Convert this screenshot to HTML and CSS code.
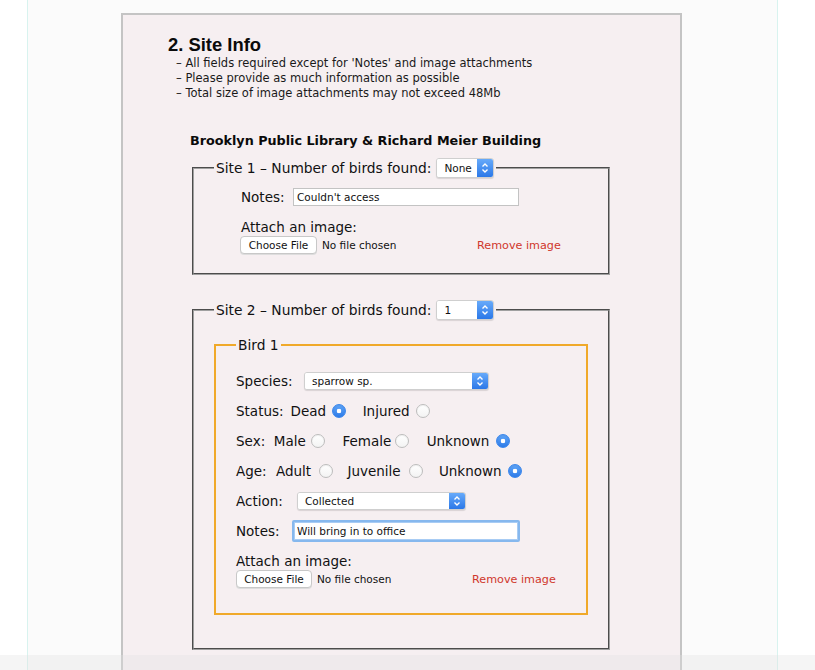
FILE: index.html
```html
<!DOCTYPE html>
<html lang="en">
<head>
<meta charset="utf-8">
<title>Site Info</title>
<link rel="stylesheet" href="styles.css">
</head>
<body>
<div class="page">
  <div class="panel">
    <h2 class="title">2. Site Info</h2>
    <ul class="bullets">
      <li>– All fields required except for 'Notes' and image attachments</li>
      <li>– Please provide as much information as possible</li>
      <li>– Total size of image attachments may not exceed 48Mb</li>
    </ul>
    <h3 class="location">Brooklyn Public Library &amp; Richard Meier Building</h3>

    <fieldset class="site site-one">
      <legend class="site-legend">Site 1 – Number of birds found:
        <span class="select sel-count"><select class="sel-native"><option>None</option><option>1</option></select><span class="stepper"><svg width="8" height="12" viewBox="0 0 8 12"><path d="M1.5 4.5 L4 2 L6.5 4.5 M1.5 7.5 L4 10 L6.5 7.5" fill="none" stroke="#fff" stroke-width="1.4"/></svg></span></span>
      </legend>
      <div class="site-body">
        <div class="row">
          <label class="lbl lbl-notes1">Notes:</label>
          <input class="text-input in-notes1" type="text" value="Couldn't access">
        </div>
        <div class="attach">
          <div class="attach-label">Attach an image:</div>
          <div class="file-row">
            <span class="file-pick"><button class="file-btn" type="button">Choose File</button><span class="file-name">No file chosen</span></span>
            <a class="remove">Remove image</a>
          </div>
        </div>
      </div>
    </fieldset>

    <fieldset class="site site-two">
      <legend class="site-legend">Site 2 – Number of birds found:
        <span class="select sel-count"><select class="sel-native"><option>1</option><option>None</option></select><span class="stepper"><svg width="8" height="12" viewBox="0 0 8 12"><path d="M1.5 4.5 L4 2 L6.5 4.5 M1.5 7.5 L4 10 L6.5 7.5" fill="none" stroke="#fff" stroke-width="1.4"/></svg></span></span>
      </legend>

      <fieldset class="bird">
        <legend class="bird-legend">Bird 1</legend>
        <div class="brow">
          <label class="lbl lbl-species">Species:</label>
          <span class="select sel-species"><select class="sel-native"><option>sparrow sp.</option></select><span class="stepper"><svg width="8" height="12" viewBox="0 0 8 12"><path d="M1.5 4.5 L4 2 L6.5 4.5 M1.5 7.5 L4 10 L6.5 7.5" fill="none" stroke="#fff" stroke-width="1.4"/></svg></span></span>
        </div>
        <div class="brow">
          <span class="lbl lbl-status">Status:</span>
          <span class="opt">Dead</span><input class="radio r-dead" type="radio" name="status" checked>
          <span class="opt o-injured">Injured</span><input class="radio r-injured" type="radio" name="status">
        </div>
        <div class="brow">
          <span class="lbl lbl-sex">Sex:</span>
          <span class="opt">Male</span><input class="radio r-male" type="radio" name="sex">
          <span class="opt o-female">Female</span><input class="radio r-female" type="radio" name="sex">
          <span class="opt o-unk1">Unknown</span><input class="radio r-unk1" type="radio" name="sex" checked>
        </div>
        <div class="brow">
          <span class="lbl lbl-age">Age:</span>
          <span class="opt">Adult</span><input class="radio r-adult" type="radio" name="age">
          <span class="opt o-juv">Juvenile</span><input class="radio r-juv" type="radio" name="age">
          <span class="opt o-unk2">Unknown</span><input class="radio r-unk2" type="radio" name="age" checked>
        </div>
        <div class="brow">
          <label class="lbl lbl-action">Action:</label>
          <span class="select sel-action"><select class="sel-native"><option>Collected</option></select><span class="stepper"><svg width="8" height="12" viewBox="0 0 8 12"><path d="M1.5 4.5 L4 2 L6.5 4.5 M1.5 7.5 L4 10 L6.5 7.5" fill="none" stroke="#fff" stroke-width="1.4"/></svg></span></span>
        </div>
        <div class="brow">
          <label class="lbl lbl-notes2">Notes:</label>
          <input class="text-input in-notes2" type="text" value="Will bring in to office">
        </div>
        <div class="attach">
          <div class="attach-label">Attach an image:</div>
          <div class="file-row">
            <span class="file-pick file-pick-bird"><button class="file-btn" type="button">Choose File</button><span class="file-name">No file chosen</span></span>
            <a class="remove">Remove image</a>
          </div>
        </div>
      </fieldset>
    </fieldset>
  </div>
</div>
<div class="bottom-shade"></div>
</body>
</html>
```

FILE: styles.css
```css
* { box-sizing: border-box; }
html, body { margin: 0; height: 100%; }
body {
  background: #ffffff;
  font-family: "DejaVu Sans", "Noto Sans", sans-serif;
  color: #111;
  overflow: hidden;
}
.page {
  margin-left: 27px;
  width: 751px;
  min-height: 100%;
  border-left: 1px solid #d8f3ef;
  border-right: 1px solid #d8f3ef;
  background: #fbfbfb;
  padding-top: 13px;
}
.panel {
  margin-left: 93px;
  width: 561px;
  min-height: 720px;
  border: 2px solid #c4c4c4;
  background: #f6eff1;
  padding: 19px 0 0 45px;
}
.title {
  margin: 0;
  font: bold 18.4px/22px "Liberation Sans", Arial, sans-serif;
  color: #0a0a0a;
}
.bullets {
  margin: 0;
  padding: 0 0 0 8px;
  list-style: none;
  font-size: 11.5px;
  line-height: 15px;
  color: #1a1a1a;
}
.location {
  margin: 31px 0 0 22px;
  font-size: 12.75px;
  line-height: 18px;
  font-weight: bold;
  color: #0a0a0a;
}
.site {
  margin: 8px 0 0 24px;
  width: 418px;
  min-width: 0;
  border: 2px groove #a0a0a0;
  padding: 4px 0 19px 20px;
}
.site-two {
  margin-top: 25px;
  padding: 16px 0 33px 20px;
}
.site-legend {
  padding: 0 2px;
  font-size: 13.8px;
  line-height: 20px;
  display: flex;
  align-items: center;
  gap: 5px;
  color: #111;
}
.site-body { padding-left: 27px; }
.row, .brow {
  display: flex;
  align-items: center;
  height: 30px;
  font-size: 13.5px;
}
.lbl { flex: none; }
.lbl-notes1 { width: 52px; }
.lbl-species { width: 68px; }
.lbl-action { width: 61px; }
.lbl-notes2 { width: 56px; }
.lbl-status { margin-right: 7px; }
.lbl-sex { margin-right: 8.6px; }
.lbl-age { margin-right: 9.3px; }
.text-input {
  height: 18px;
  border: 1px solid #c3c3c3;
  background: #fff;
  font-family: "DejaVu Sans", sans-serif;
  font-size: 10.5px;
  padding: 0 3px;
  color: #111;
  outline: none;
}
.in-notes1 { width: 226px; }
.in-notes2 {
  width: 228px;
  height: 22px;
  border: 2px solid #86b8ee;
  border-radius: 2px;
  box-shadow: inset 0 0 0 1px #a8ccf4;
}
.attach { margin-top: 6px; font-size: 13.5px; }
.attach-label { line-height: 18px; height: 18px; }
.file-row { display: flex; align-items: center; height: 18px; }
.file-pick { width: 237px; display: flex; align-items: center; flex: none; }
.file-pick-bird { width: 236px; }
.site-body .file-pick { margin-left: -1px; }
.file-btn {
  width: 77px;
  height: 18px;
  padding: 0;
  border: 1px solid #c8c8c8;
  border-radius: 4px;
  background: #fff;
  font-family: "DejaVu Sans", sans-serif;
  font-size: 10.5px;
  color: #111;
  box-shadow: 0 1px 0 #ddd;
}
.file-pick-bird .file-btn { width: 76px; }
.file-name { margin-left: 5px; font-size: 10.5px; color: #111; }
.remove { font-size: 11.2px; color: #d0372c; }
.select {
  display: inline-flex;
  align-items: stretch;
  height: 20px;
  background: #fff;
  border: 1px solid #cfcfcf;
  border-radius: 3px;
  box-shadow: 0 1px 1px rgba(0,0,0,0.12);
  overflow: hidden;
  flex: none;
}
.sel-native {
  appearance: none;
  -webkit-appearance: none;
  border: none;
  background: #fff;
  font-family: "DejaVu Sans", sans-serif;
  font-size: 10.5px;
  color: #111;
  padding: 0 0 0 7px;
  outline: none;
  flex: 1;
  min-width: 0;
}
.stepper {
  width: 16px;
  flex: none;
  background: linear-gradient(#67aafa, #2b78e8);
  display: flex;
  align-items: center;
  justify-content: center;
}
.sel-count { width: 58px; }
.sel-species { width: 185px; height: 18px; }
.sel-action { width: 169px; height: 18px; }
.bird {
  margin: 0;
  width: 374px;
  min-width: 0;
  border: 2px solid #f0a92a;
  padding: 12px 0 25px 20px;
}
.bird-legend {
  padding: 0 2px;
  font-size: 13.8px;
  line-height: 18px;
  color: #111;
}
.opt { flex: none; }
.radio {
  appearance: none;
  -webkit-appearance: none;
  margin: 0;
  width: 14px;
  height: 14px;
  border-radius: 50%;
  border: 1px solid #bdbdbd;
  background: linear-gradient(#fff, #f3f3f3);
  box-shadow: inset 0 1px 1px rgba(0,0,0,0.06);
  flex: none;
}
.radio:checked {
  border-color: #3a86ec;
  background: radial-gradient(circle, #fff 0 2px, transparent 2.6px), linear-gradient(#5fa5f8, #2d7be8);
}
.r-dead { margin-left: 5.5px; }
.o-injured { margin-left: 17px; }
.r-injured { margin-left: 6.7px; }
.r-male { margin-left: 5px; }
.o-female { margin-left: 17.7px; }
.r-female { margin-left: 3.7px; }
.o-unk1 { margin-left: 17.7px; }
.r-unk1 { margin-left: 6.3px; }
.r-adult { margin-left: 7.6px; }
.o-juv { margin-left: 14.7px; }
.r-juv { margin-left: 8px; }
.o-unk2 { margin-left: 16.3px; }
.r-unk2 { margin-left: 6px; }
.bottom-shade {
  position: fixed;
  left: 0;
  right: 0;
  bottom: 0;
  height: 15px;
  background: rgba(225, 225, 225, 0.35);
}
```
